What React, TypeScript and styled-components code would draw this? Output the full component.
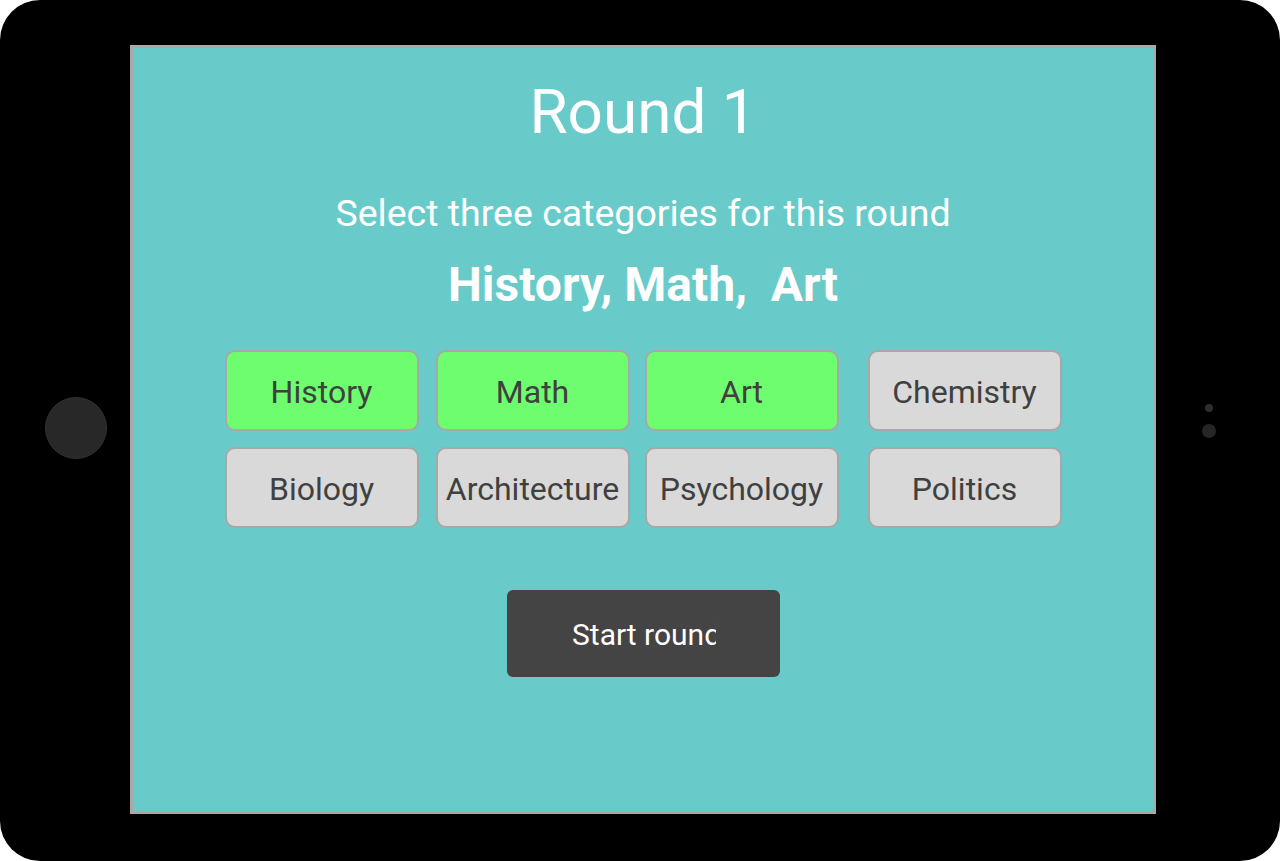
import React, { useState } from "react";
import styled, { createGlobalStyle } from "styled-components";

const Global = createGlobalStyle`
  html, body { margin: 0; padding: 0; background: #ffffff; }
  body { font-family: Roboto, "Liberation Sans", sans-serif; }
  * { box-sizing: border-box; }
`;

const Device = styled.div`
  width: 1280px;
  height: 861px;
  background: #000000;
  border-radius: 40px;
  display: flex;
  align-items: flex-start;
  overflow: hidden;
`;

const LeftBezel = styled.div`
  width: 130px;
  height: 861px;
  display: flex;
  align-items: center;
  padding-left: 45px;
  padding-bottom: 5px;
`;

const HomeButton = styled.div`
  width: 62px;
  height: 62px;
  border-radius: 50%;
  background: #282828;
  border: 1px solid #303030;
`;

const RightBezel = styled.div`
  flex: 1;
  height: 861px;
  display: flex;
  flex-direction: column;
  justify-content: center;
  align-items: flex-start;
  padding-left: 46px;
  padding-bottom: 20px;
  gap: 12px;
`;

const Sensor = styled.div<{ $size: number; $color: string }>`
  width: ${(p) => p.$size}px;
  height: ${(p) => p.$size}px;
  border-radius: 50%;
  background: ${(p) => p.$color};
  margin-left: ${(p) => (14 - p.$size) / 2}px;
`;

const Screen = styled.main`
  margin-top: 45px;
  width: 1026px;
  height: 769px;
  background: #69cbc9;
  border: 3px solid #a9a9a9;
  display: flex;
  flex-direction: column;
  align-items: center;
  color: #ffffff;
`;

const Title = styled.h1`
  margin: 27px 0 0;
  font-size: 62px;
  line-height: 74px;
  font-weight: 400;
`;

const Subtitle = styled.p`
  margin: 42px 0 0;
  font-size: 37.5px;
  line-height: 44px;
  font-weight: 400;
`;

const Chosen = styled.h2`
  margin: 22px 0 0;
  font-size: 48px;
  line-height: 56px;
  font-weight: 700;
  white-space: pre;
`;

const Grid = styled.div`
  margin-top: 37px;
  display: grid;
  grid-template-columns: repeat(4, auto);
  grid-auto-rows: 81px;
  row-gap: 16px;
`;

const Category = styled.button<{ $on: boolean; $shift: number }>`
  width: 194px;
  height: 81px;
  margin-left: ${(p) => p.$shift}px;
  border: 2px solid #a8a8a8;
  border-radius: 10px;
  background: ${(p) => (p.$on ? "#6dfd6f" : "#d9d9d9")};
  color: #404040;
  font-family: Roboto, "Liberation Sans", sans-serif;
  font-size: 32px;
  padding: 3px 0 0;
  white-space: nowrap;
  cursor: pointer;
`;

const StartButton = styled.button`
  margin-top: 62px;
  margin-left: 1px;
  width: 273px;
  height: 87px;
  border: none;
  border-radius: 6px;
  background: #444444;
  color: #ffffff;
  display: flex;
  align-items: center;
  padding: 3px 0 0 65px;
  cursor: pointer;
`;

const StartLabel = styled.span`
  display: block;
  width: 144px;
  overflow: hidden;
  white-space: nowrap;
  font-family: Roboto, "Liberation Sans", sans-serif;
  font-size: 30px;
  line-height: 36px;
  text-align: left;
`;

const categories = [
  "History",
  "Math",
  "Art",
  "Chemistry",
  "Biology",
  "Architecture",
  "Psychology",
  "Politics",
];

const shifts = [0, 17, 15, 29];

export default function App() {
  const [selected, setSelected] = useState<string[]>(["History", "Math", "Art"]);
  const toggle = (c: string) =>
    setSelected((s) => (s.includes(c) ? s.filter((x) => x !== c) : [...s, c]));

  return (
    <>
      <Global />
      <Device>
        <LeftBezel>
          <HomeButton />
        </LeftBezel>
        <Screen>
          <Title>Round 1</Title>
          <Subtitle>Select three categories for this round</Subtitle>
          <Chosen>{"History, Math,  Art"}</Chosen>
          <Grid>
            {categories.map((c, i) => (
              <Category
                key={c}
                $on={selected.includes(c)}
                $shift={shifts[i % 4]}
                onClick={() => toggle(c)}
              >
                {c}
              </Category>
            ))}
          </Grid>
          <StartButton>
            <StartLabel>Start round</StartLabel>
          </StartButton>
        </Screen>
        <RightBezel>
          <Sensor $size={8} $color="#2e2e2e" />
          <Sensor $size={14} $color="#262626" />
        </RightBezel>
      </Device>
    </>
  );
}
